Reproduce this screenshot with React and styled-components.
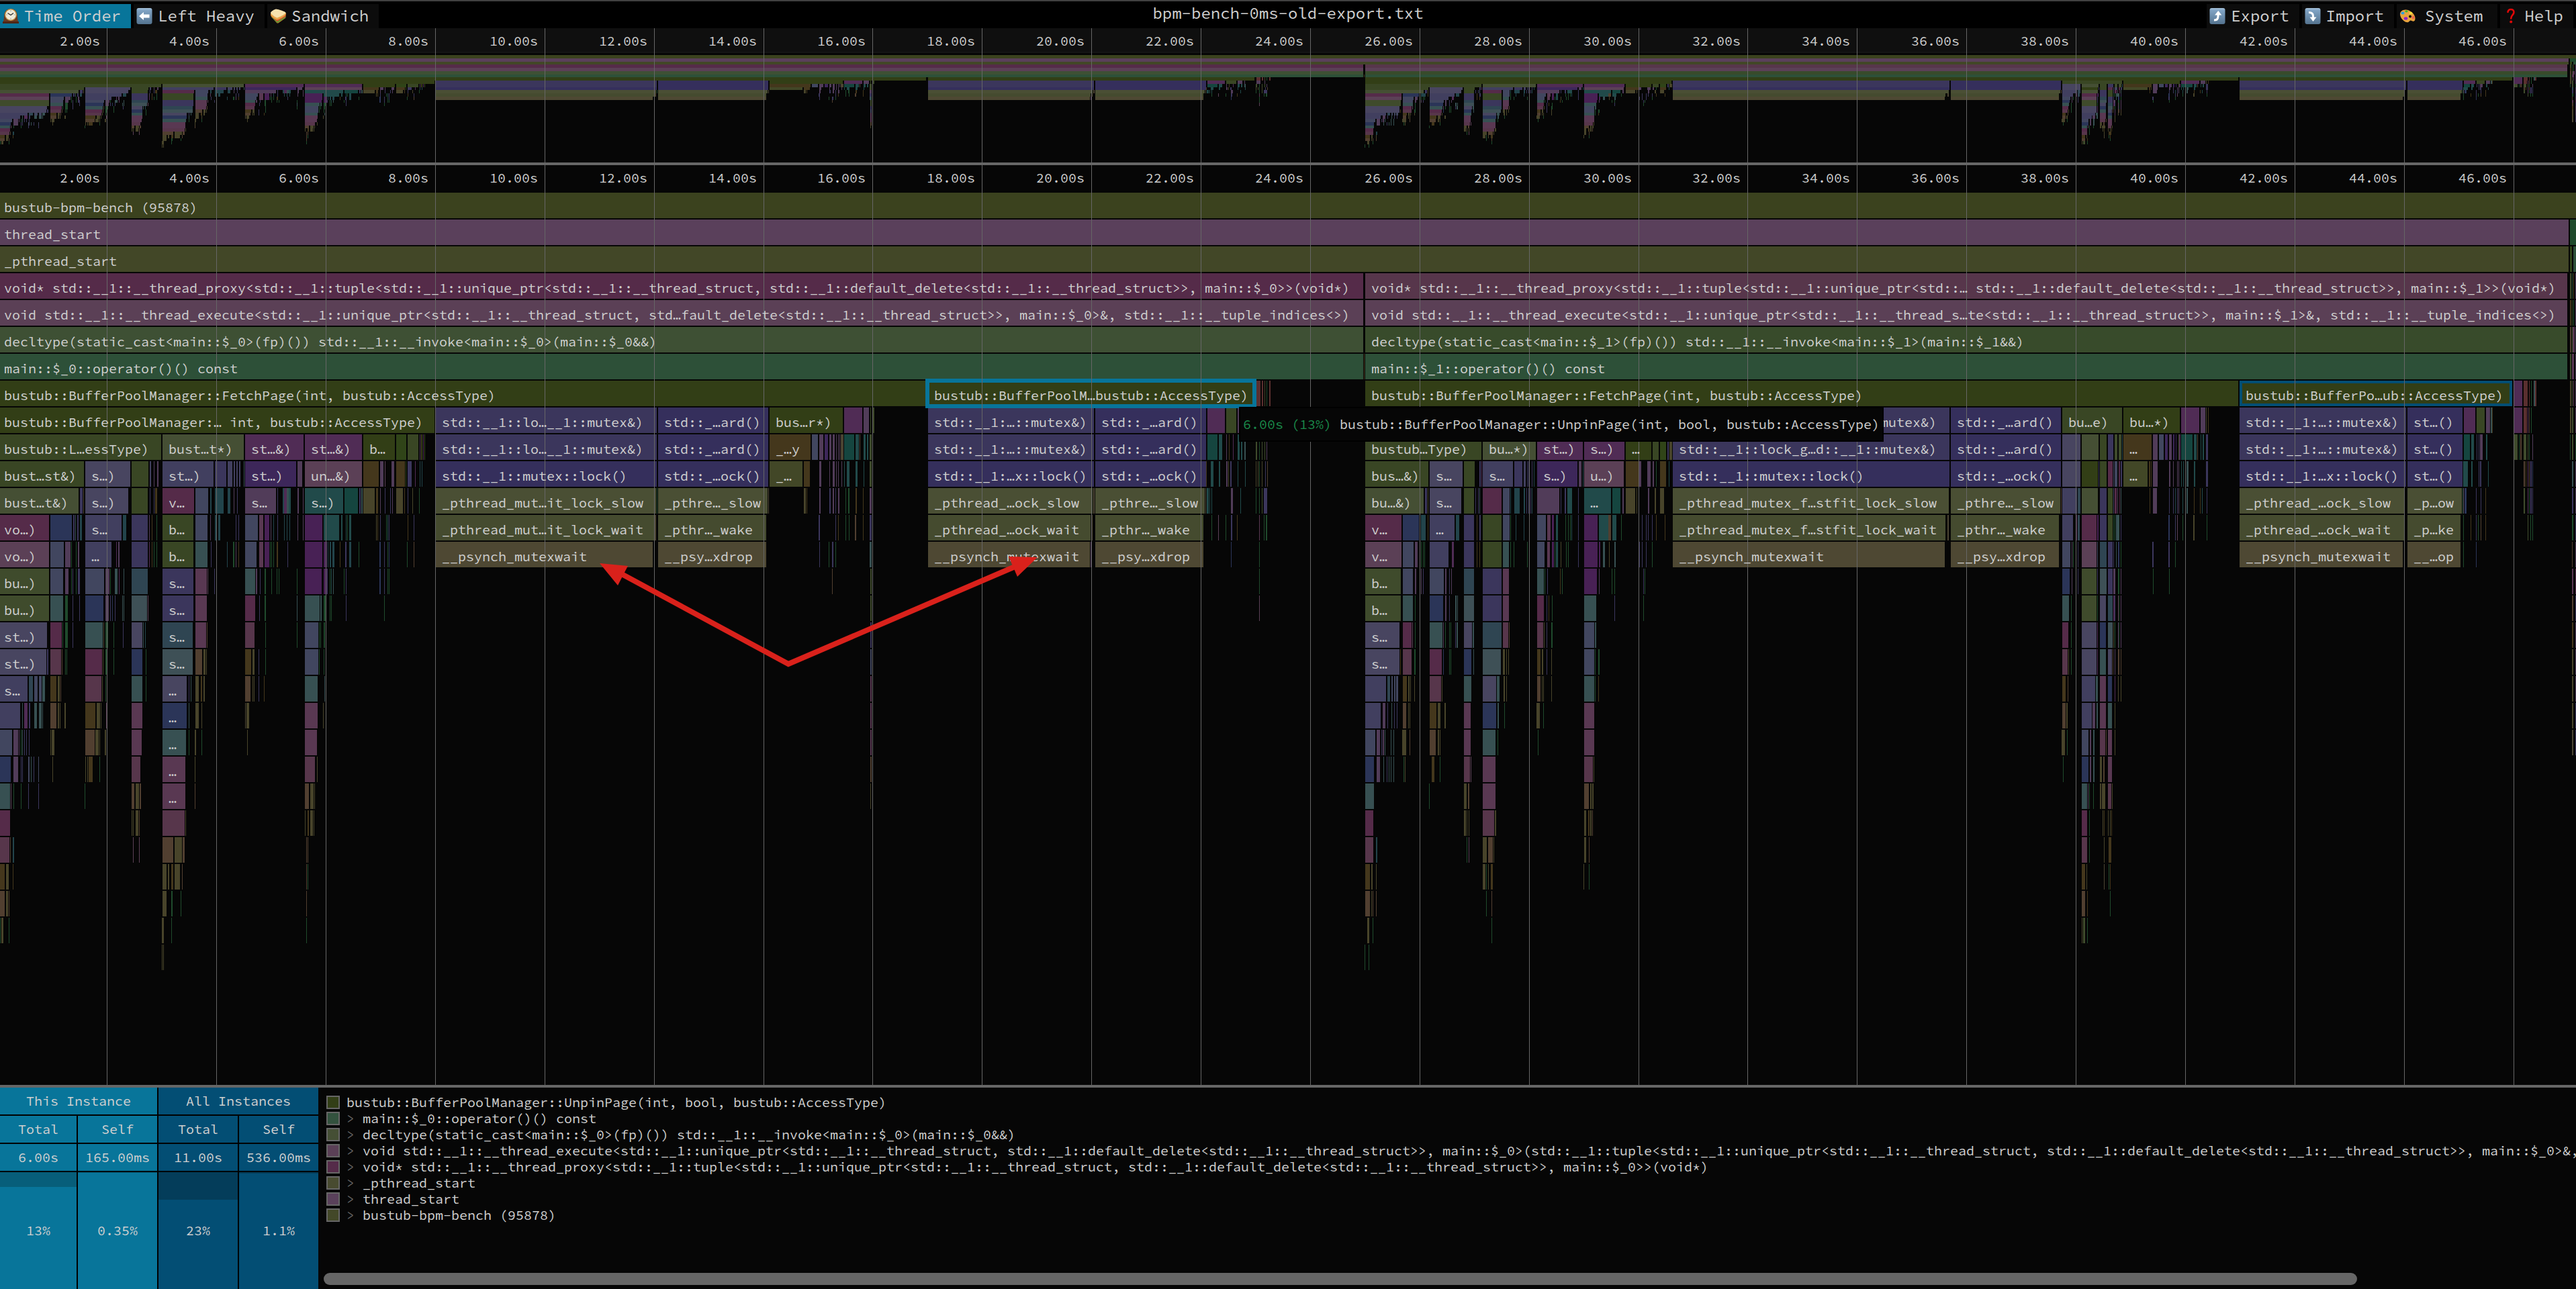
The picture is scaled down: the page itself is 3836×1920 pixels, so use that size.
import React, { useEffect, useMemo, useRef, useState } from "react";
import styled, { createGlobalStyle } from "styled-components";

const MONO = '"Source Code Pro", "Liberation Mono", monospace';

const color = {
  bg: "#060606",
  axis: "#0f0f0f",
  line: "#666666",
  text: "#d0d0d0",
  black: "#000000",
  primary: "#08759a",
  secondary: "#034e74",
};

const GlobalStyle = createGlobalStyle`
  * { box-sizing: border-box; }
  html, body, #root { height: 100%; }
  body {
    margin: 0;
    overflow: hidden;
    background: ${color.bg};
    color: ${color.text};
    font-family: ${MONO};
    font-size: 20px;
    line-height: 24px;
  }
`;

/* ---------- frame data ---------- */

const FILL = {
  O: "#323e16", G: "#394624", H: "#454f34", K: "#3f4b2c", k: "#304418",
  L: "#484560", l: "#413f5f", P: "#3b365c", D: "#352f5c", B: "#2b3558",
  S: "#41465f", T: "#375052", t: "#3e5056", u: "#2f4552", v: "#552b49",
  w: "#593852", q: "#57364b", r: "#5b4056", m: "#502c55", n: "#513c59",
  y: "#3d275a", z: "#482155", x: "#15453f", X: "#214a4a", i: "#22444b",
  e: "#44371c", f: "#513f30", h: "#48442a", j: "#4c4533", F: "#1f4a2c",
  R: "#5a2f2f", W: "#4a4f34", A: "#454b2f", V: "#4e4833", a: "#3b421e",
  b: "#5a405b", c: "#424727", d: "#3e5034", g: "#2d5038", E: "#384b2b",
};

/*
  Each block lists its rows from a starting depth. A frame is
  "start[-end]<fill>[ label]" in block ticks; a frame without an end is a
  single sample wide. `scale` is ticks per chart unit.
*/
const BLOCKS = [
  {
    origin: 0, scale: 1, depth: 0, rows: [
      "0-3836a bustub-bpm-bench (95878)",
      "0-3825b thread_start",
      "0-3825c _pthread_start",
      "0-2030v void* std::__1::__thread_proxy<std::__1::tuple<std::__1::unique_ptr<std::__1::__thread_struct, std::__1::default_delete<std::__1::__thread_struct>>, main::$_0>>(void*)/2033-3823q void* std::__1::__thread_proxy<std::__1::tuple<std::__1::unique_ptr<std::… std::__1::default_delete<std::__1::__thread_struct>>, main::$_1>>(void*)",
      "0-2030r void std::__1::__thread_execute<std::__1::unique_ptr<std::__1::__thread_struct, std…fault_delete<std::__1::__thread_struct>>, main::$_0>&, std::__1::__tuple_indices<>)/2033-3823r void std::__1::__thread_execute<std::__1::unique_ptr<std::__1::__thread_s…te<std::__1::__thread_struct>>, main::$_1>&, std::__1::__tuple_indices<>)",
      "0-2030d decltype(static_cast<main::$_0>(fp)()) std::__1::__invoke<main::$_0>(main::$_0&&)/2033-3823E decltype(static_cast<main::$_1>(fp)()) std::__1::__invoke<main::$_1>(main::$_1&&)",
      "0-2030g main::$_0::operator()() const/2031e/2033-3823g main::$_1::operator()() const",
      "0-1379O bustub::BufferPoolManager::FetchPage(int, bustub::AccessType)/2033-3333O bustub::BufferPoolManager::FetchPage(int, bustub::AccessType)/3335-3741O bustub::BufferPo…ub::AccessType)",
      "0-647O bustub::BufferPoolManager:… int, bustub::AccessType)/2033-2489O/2491-2903P std::__1::lock_g…d::__1::mutex&)/2905-3069D std::_…ard()/3335-3583P std::__1:…::mutex&)/3585-3667D st…()",
      "2491-2903P std::__1::lock_g…d::__1::mutex&)/2905-3069D std::_…ard()/3335-3583P std::__1:…::mutex&)/3585-3667D st…()",
      "2491-2903D std::__1::mutex::lock()/2905-3069D std::_…ock()/3335-3583D std::__1:…x::lock()/3585-3667D st…()",
      "2491-2902W _pthread_mutex_f…stfit_lock_slow/2905-3068W _pthre…_slow/3335-3581W _pthread_…ock_slow/3585-3666W _p…ow",
      "2491-2897A _pthread_mutex_f…stfit_lock_wait/2900-2902j/2905-3066A _pthr…_wake/3335-3580A _pthread_…ock_wait/3585-3664A _p…ke",
      "2491-2896V __psynch_mutexwait/2905-3066V __psy…xdrop/3335-3578V __psynch_mutexwait/3585-3664V __…op",
    ],
  },
  {
    origin: 0, scale: 2.3758, depth: 9, rows: [
      "0-570G bustub::L…essType)/575-862H bust…t*)/867-1074m st…&)/1079-1281m st…&)/1285-1397O b…/1402-1437k/1442-1480G/1485n/1490e/1493k/1497m/1502k",
      "0-297G bust…st&)/302-461L s…)/466-525G/530-535l/544n/555-561n/575-755l st…)/760-801P/805-822l/827-832l/836-841l/846-851l/862T/867-1048y st…)/1052-1069n/1079-1281r un…&)/1285-1340e/1345-1357n/1361r/1385-1394n/1402-1433e/1435k/1442-1456P/1468m/1485i/1492i",
      "0-278H bust…t&)/283-292P/295j/302-454L s…)/466-523G/530P/544P/549-556e/575-687v v…/691-736S/744-748i/760-791i/805-815i/827n/839P/867-976n s…/981P/1000-1005i/1005-1014m/1014-1022T/1022-1028X/1052-1057n/1071n/1079-1214X s…)/1218-1266x/1271-1276P/1278-1282T/1285-1326h/1330-1337e/1345n/1361P/1380P/1387n/1402-1425h/1430e/1442P/1459h/1482F",
      "0-173v vo…)/178-254B/259-264P/266T/274-279P/283-290i/302-430l s…/435-447i/466-523P/528n/537e/554F/575-684G b…/691-734S/744n/760-765i/772-779i/835P/843P/867-912S/917-931w/936-953z/958n/967i/981P/1004i/1014i/1023i/1052n/1071n/1079-1140z/1145-1200X/1207-1211X/1223X/1228F/1235-1243X/1330h/1335e/1345P/1366F/1371X/1376P/1441e/1463P",
      "0-173r vo…)/178-226S/230-249n/252F/268F/276-280n/302-394l …/411m/418-423n/466-523P/527m/537e/543F/554F/575-684G b…/691-734T/746P/764P/803i/824-829F/834n/843e/867-908S/917-931w/936-953z/955F/960F/966F/979-984e/1017P/1079-1140z/1145-1156z/1160i/1167-1171i/1177-1183i/1202e/1221-1226P/1235-1243i/1269F/1342-1347B/1359P/1371F/1376B/1440F/1463f",
      "0-173K bu…)/178-223S/230-242n/252F/257P/268F/276-283P/302-368S/373-387n/390F/406-416T/421m/437T/466-523u/575-684P s…/691-732w/734r/758P/867-903T/905-909n/919P/936-941F/960F/979F/986F/1050F/1079-1138z/1145-1156z/1158P/1167F/1171X/1178T/1216F/1223P/1342-1347B/1359P/1371F/1376F",
      "0-173K bu…)/178-223T/230-240F/257P/280P/302-366B/373-385n/390P/397B/406P/432T/437T/466-520t/523r/575-684P s…/691-732w/867-903v/917P/936-941F/1050T/1079-1131T/1133-1138T/1145-1153F/1166F/1171F/1224P/1359F",
      "0-166L st…)/178-219v/221F/230-240F/257P/302-363T/366j/373-382F/402F/435P/466-504L/507T/514i/575-682u s…/691-729w/732f/867-900q/938F/1050F/1079-1126S/1128F/1134F/1145-1151F",
      "0-164L st…)/166-170P/178-216q/219f/230F/235F/302-361v/364h/373-378F/402F/466-504B/516F/575-682t s…/691-715f/720-727h/730h/867-889e/893-900h/915P/938F/1079-1126S/1128F/1145F",
      "0-97l s…/102-116u/121-133S/138-147S/150-159T/178-200e/204-211h/214f/302-359q/362h/374F/466-504T/516F/575-660L …/668P/675T/691-703h/710-715e/720-725h/867-886f/893h/898h/915P/934e/1079-1124T/1147T",
      "0-71l/78T/85-97m/102-107P/121-131T/138-147T/150T/178-200f/204-209h/212h/228-232h/302-337e/342-354h/357h/375r/466-504w/575-660B …/668T/691-703h/713h/867j/871-881h/1079-1124w/1143h",
      "0-43S/48-64n/67n/74F/78T/86P/93P/102P/178h/183-192h/302-335f/337-341h/343-349h/352h/371-375h/466-501w/575-658T …/668F/689-693h/713F/874h/1079-1121w",
      "0-38B/48-64n/74P/79P/100-105S/109T/119P/135S/185h/302h/309h/314-328e/352F/466-497q/575-656w …/689h/1079-1114q/1121h",
      "0-36T/38r/48F/74F/100P/135P/299F/466-475f/480-492h/494-499f/575-656w …/689f/1079-1093f/1098-1109h/1112h",
      "0-36v/466h/471h/480-490h/492f/575-653q/656h/1079h/1088-1093e/1098-1107h/1110h",
      "0-33q/36f/45-49i/470r/492r/575-613f/618-644h/646-653f/1083f/1088f",
      "0-17e/21-31h/45e/575-589h/594-599h/606-613e/618-637h/644f/1083f/1088F",
      "0-17f/21-29h/31f/575-589h/606-611F/639F/1083f",
      "0F/4-12h/31F/573-580h/606F/1083F",
      "573h/578h",
    ],
  },
  {
    origin: 640, scale: 2.24, depth: 8, rows: [
      "20-757P std::__1::lo…__1::mutex&)/762-1129D std::_…ard()/1133-1378O bus…r*)/1382-1443m/1447-1465n/1469G/1476-1483G",
      "20-757P std::__1::lo…__1::mutex&)/762-1129D std::_…ard()/1133-1270e _…y/1275-1295S/1299-1313n/1317-1328y/1333-1340n/1344-1351n/1355n/1361n/1366n/1371-1379j/1382-1416x/1420-1431X/1434f/1447-1454X/1458-1463X/1467-1474K",
      "20-757D std::__1::mutex::lock()/762-1129D std::_…ock()/1133-1243c _…/1248-1268e/1299-1306n/1333n/1344-1351n/1355n/1361n/1373n/1382X/1391-1400X/1420-1427X/1447X/1467-1474K",
      "20-755W _pthread_mut…it_lock_slow/757F/762-1127W _pthre…_slow/1129j/1248-1254h/1257e/1299-1304n/1333-1337P/1344-1348n/1353P/1362-1366n/1387F/1396-1400F/1420-1425e/1445e/1467-1474n",
      "20-748A _pthread_mut…it_lock_wait/750-755j/762-1122A _pthr…_wake/1297-1301P/1353P/1362e/1387F/1398F/1418-1422f/1445e/1467-1474P",
      "20-744V __psynch_mutexwait/762-1122V __psy…xdrop/1299P/1331F/1342-1346P/1353F/1467-1474T",
      "1342f/1469-1474K",
      "1469-1474K",
      "1469-1474P",
      "1469-1474S",
      "1469-1474w",
      "1469-1474w",
      "1469-1474w",
      "1469-1474f",
      "1469h",
    ],
  },
  {
    origin: 1340, scale: 2.24, depth: 7, rows: [
      "94-1182O bustub::BufferPoolM…bustub::AccessType)/1189-1203R/1207-1212R/1217h/1223F/1232-1236R",
      "94-647P std::__1:…::mutex&)/652-1021D std::_…ard()/1026-1084m/1089-1122G/1127-1142n/1149n/1189-1203n/1216n",
      "94-647P std::__1:…::mutex&)/652-1021D std::_…ard()/1026-1060x/1064-1075X/1089n/1098e/1112m/1127-1133X/1138-1142X/1149-1154T/1187-1192K/1198F/1207K/1216K/1223n",
      "94-647D std::__1:…x::lock()/652-1021D std::_…ock()/1021e/1037-1046X/1064-1068X/1089-1093n/1096h/1102-1107P/1127X/1151X/1187h/1193h/1198F/1207h/1219P/1225f",
      "94-642W _pthread_…ock_slow/645-650j/652-1017W _pthre…_slow/1019j/1024-1030X/1033X/1039X/1104-1110n/1136X/1187F/1198F/1207K/1214-1225P",
      "94-636A _pthread_…ock_wait/640j/652-1012A _pthr…_wake/1039F/1062r/1087F/1104-1108P/1124e/1198w/1214F/1221-1225F",
      "94-634V __psynch_mutexwait/637n/652-1012V __psy…xdrop/1104B/1198F",
      "1198F",
      "1198r",
    ],
  },
  {
    origin: 2020, scale: 2.24, depth: 9, rows: [
      "29-417G bustub…Type)/421-598H bu…*)/603-755m st…)/759-894m s…)/898-983O …/988-1008G/1012-1033k/1037-1042P/1044-1053h",
      "29-240G bus…&)/244-354L s…/358-394G/410-415P/416m/421-522l s…/526-553P/558-564l/568P/574P/585P/592i/603-737y s…)/741-751n/754i/759-892r u…)/898-940e/943-950n/970-981n/988-992n/999F/1012-1033e/1042X",
      "29-224H bu…&)/228-235P/237h/244-349L s…/358-392G/396P/405P/411T/421-484v/488-511S/513i/526-544i/558-562i/567P/574P/580P/585i/603-676n/681P/694-698P/703-719X/740P/759-849X …/853-880x/887-892n/898-930h/934h/972-977n/995-1000h/1012-1026h",
      "29-150v v…/155-208B/215-230i/237e/244-327l …/332-343i/358-392P/401e/410-414P/421-484G/488-511S/513F/531i/557i/603-632S/636-647w/652-659z/665-673X/697F/705F/712F/717X/740P/759-804z/809-840X/841-849f/853-867X/883F/952P/965P/972P/986P/999e/1028e",
      "29-150r v…/155-190S/195-204n/210P/215F/221F/226F/244-307l/318-325m/358-392P/401e/410e/421-484G/488-508T/513F/524F/568F/603-627S/636-645w/652-659z/661F/666-672X/680-684h/699F/706F/740P/759-804z/809-813z/821-829T/842h/860-865T/942P/952P/965P/986F",
      "29-148K b…/155-188S/195-199n/215n/222P/244-291S/296-301n/309P/316n/358-392u/421-484P/488-508w/603-625T/628F/636P/679e/685F/759-802z/809n/851F/860F/941F/956P/961F",
      "29-148K b…/155-188T/195F/244-289B/296-301n/309P/329-333T/335T/358-392t/421-484P/488-508w/603-625v/634P/641e/652F/759-800T/860P/956F",
      "29-143L s…/155-184v/186r/195F/244-287T/289n/296F/309F/314F/329P/334-338T/358-385L/388-392T/421-484u/488-506q/508f/603-623q/625h/634P/650-654F/759-793S/795-800T",
      "29-143L s…/146e/155-184q/193-197F/244-284v/289B/309F/314F/358-383B/390T/421-482t/488-495h/500h/506h/603-614e/618-623h/634P/650h/759-793S/795F/806-811F",
      "29-99l/103-112u/116-121S/125-130S/133-139S/155-168e/172-177h/179h/193h/244-282q/284h/358-383T/421-466L/468-477T/491-495h/500h/603-614f/618h/623h/650h/759-793T/795F/806e",
      "29-81l/87-96n/103P/116T/125P/134P/155-166f/172h/177h/244-267e/271-280h/293-298h/358-381w/421-466B/470-475T/493F/600-612h/623F/759-793w",
      "29-63S/67-78n/83P/87-91n/94T/114T/123T/152-166h/177f/244-264f/271-276h/278h/358-381w/421-464T/470F/605F/759-793w",
      "29-58B/67-78n/90T/101P/107T/114T/123T/157F/161h/251-260e/278F/358-379q/381r/421-464w/759-788q/791h",
      "29-58T/242F/358-367h/372-376f/421-464w/759-775f/780-784h/786-791h",
      "29-56v/358-365h/367h/373h/421-459q/461-466h/759-766h/773-777e/780-784h/786f",
      "29-56q/65-69i/367F/373r/421-435h/439-455f/457h/759-766h/775f",
      "29-45e/49-54h/65h/421-430h/432F/439h/448-455e/757h/775F",
      "29-45f/49-52h/54f/65f/432F/450f",
      "36-43h/54F/450F",
      "27F/40F",
    ],
  },
  {
    origin: 3060, scale: 3, depth: 8, rows: [
      "33-300G bu…e)/306-558O bu…*)/564-645m/651-672n/675h/684e",
      "33-114L/120-195H/201-231G/237-261P/267-279K/285-297K/300i/306-432e …/438-459n/465-486S/492-504y/510-522n/528-534y/540y/552K/555-561m/564-615x/621-633X/636f/651X/660-666X/675-684P",
      "33-114L/120-192O/195P/201-231G/237-258v/261S/267-279S/285-291v/294-300P/306-414c …/420-426e/429e/438-459n/510-516n/528n/546n/552n/564X/573X/582X/588-597T/621-627X/675-684P",
      "27f/33-99l/102-114u/120-192H/201-231P/237-258G/261S/267-276v/279n/288v/294T/423e/438-456n/510P/528P/537i/546P/552n/570X/588-594T/621e/648e/657X/678P",
      "33-81l/93-99m/102-111u/120-186v/189-195z/201-231P/237-258G/261F/267F/273-288T/294P/507-513B/537P/546r/570F/618-624h/678F",
      "33-69S/75n/81F/93P/102P/120-186r/189S/201-231u/237-258P/261P/273T/282-288B/294F/435-441P/507-513P/537F",
      "33-66B/75n/93n/102P/120-186K/189P/201-231t/237-258P/261-270n/282-288F/294n/438F/510F",
      "33-63T/72F/93F/120-186K/189F/201-228L/237-258u/261-267m/267P/282v/285F/294n",
      "33-60v/72F/93F/120-186L/189m/201-228B/237-258t/261h/267F/282m/285F/294n",
      "33-57q/60h/72F/120-186L/189m/201-228T/237-255L/258f/267n/282-288f/294f",
      "33-48e/57f/120-180l/183-191T/201-228w/237-255B/267m/282h/294h",
      "33-48f/51-57h/120-165l/168-180n/186-192T/201-228w/237-255T/267h",
      "30-45h/54F/120-150S/156-162n/171-177T/201-225q/228f/237-255w/267h",
      "36F/120-150B/156-162n/171-177T/201-210h/216-222f/237-255w",
      "120-144T/147n/153F/171F/201-207h/210-225h/237-252q/255h",
      "120-144v/153F/213h/219e/237h/246h/252e",
      "120-144q/153F/219h/240-252e",
      "120-135e/141h/219j/240F/246e",
      "120-135f/144e/246F",
      "120h/126-135K/144F",
    ],
  },
  {
    origin: 3650, scale: 3, depth: 1, rows: [
      "531-558F",
      "531-540k/546-558g",
      "531-537K/540F/546e/555n",
      "531-537e/540k/546F/555n",
      "531-537f/540k/543-552w/555n",
      "531-537K/540-549w/555n",
      "278-318m/324-342R/348R/357F/369-375T/375-381R/531-537h/540K/546w/555n",
      "57-108m/114-150G/156-174n/177-183T/183e/279-318m/324-339R/342m/348f/357F/531-537h/540-546K/555n",
      "57-84x/90-102X/114P/123P/129-141n/156-162X/279-297K/303F/309-315f/324-336K/342K/348F/363n/531F/540-546K/555F",
      "54-75X/60n/90-96X/123P/129-135P/165X/279P/324-330f/333e/342m/348f/354-360P/363B/540-546T/555n",
      "51F/54n/60-69B/111P/132P/153e/324-330K/342m/348F/354-360P/363P/540-546P/555n",
      "54F/87e/111P/120F/132f/153e/342K/354F/363F/540-546F/555P",
      "54F/111B/540f/555n",
      "540-546w/555v",
      "540-546f/555P",
      "540-546e/555n",
      "540-546h/555n",
      "540-546h/555n",
      "540-546h/555P",
      "540-546j/555P",
    ],
  },
];

const parseFrames = () =>
  BLOCKS.flatMap(({ origin, scale, depth, rows }) =>
    rows.flatMap((row, i) =>
      row.split("/").map((cell) => {
        const [, from, to, fill, label] = cell.match(/^(\d+)(?:-(\d+))?(\w)(?: (.*))?$/);
        const x = Math.round(origin + from / scale);
        const end = to ? Math.round(origin + to / scale) : x + 1;
        return { x, width: Math.max(1, end - x), depth: depth + i, fill, label };
      })
    )
  );

const FRAMES = parseFrames();

const CHART_UNITS = 3836;
const ROW_PITCH = 40;
const CHART_TOP = 41;
const SELECTED_DEPTH = 7;
const GRID_START = -3.5;
const GRID_STEP = 162.87;
const GRID_SECONDS = Array.from({ length: 23 }, (_, i) => (i + 1) * 2);

const gridX = (seconds, ratio) =>
  Math.round((GRID_START + (seconds / 2) * GRID_STEP) * ratio);

const framePaths = (ratio, top, pitch, gap) => {
  const byFill = {};
  FRAMES.forEach(({ x, width, depth, fill }) => {
    const y0 = Math.round(top + depth * pitch);
    const y1 = Math.round(top + (depth + 1) * pitch) - gap;
    const x0 = Math.round(x * ratio);
    const w = Math.max(1, Math.round(width * ratio));
    byFill[fill] = `${byFill[fill] || ""}M${x0} ${y0}h${w}v${y1 - y0}h${-w}z`;
  });
  return Object.entries(byFill);
};

const useRatio = (ref) => {
  const [width, setWidth] = useState(() => window.innerWidth);
  useEffect(() => {
    const observer = new ResizeObserver(([entry]) => setWidth(entry.contentRect.width));
    observer.observe(ref.current);
    return () => observer.disconnect();
  }, [ref]);
  return width / CHART_UNITS;
};

/* ---------- layout ---------- */

const Page = styled.div`
  display: flex;
  flex-direction: column;
  height: 100vh;
  background: ${color.bg};
`;

const Toolbar = styled.header`
  display: grid;
  grid-template-columns: 1fr auto 1fr;
  flex: none;
  height: 42px;
  padding-top: 4px;
  border-top: 2px solid #404040;
  background: ${color.black};
  font-size: 24px;
  line-height: 36px;
`;

const ToolGroup = styled.nav`
  display: flex;
  gap: 4px;
  justify-content: ${(p) => (p.$end ? "flex-end" : "flex-start")};
  padding-right: ${(p) => (p.$end ? "4px" : "0")};
`;

const ToolButton = styled.button`
  display: flex;
  align-items: center;
  gap: ${(p) => (p.$roomy ? "14px" : "8px")};
  height: 36px;
  padding: 0 ${(p) => (p.$roomy ? "22px" : "15px")} 0 4px;
  border: 0;
  background: ${(p) => (p.$active ? color.primary : "#0c0c0c")};
  color: ${color.text};
  font: inherit;
  white-space: pre;
`;

const Title = styled.h1`
  margin: 0;
  font: inherit;
  line-height: 28px;
`;

const Overview = styled.section`
  flex: none;
  height: 204px;
  border-bottom: 4px solid ${color.line};
`;

const Flame = styled.main`
  position: relative;
  flex: 1;
  min-height: 0;
  overflow: hidden;
  border-bottom: 4px solid ${color.line};
`;

const Chart = styled.svg`
  display: block;
  width: 100%;
  height: 100%;
  font-family: ${MONO};
  font-size: 20px;
  fill: ${color.text};
  shape-rendering: crispEdges;
`;

const Notes = styled.svg`
  position: absolute;
  inset: 0;
  width: 100%;
  height: 100%;
  pointer-events: none;
`;

const Tooltip = styled.div`
  position: absolute;
  top: 360px;
  left: 48.1%;
  height: 52px;
  padding: 12px 4px;
  border: 2px solid ${color.black};
  background: ${color.bg};
  white-space: nowrap;
`;

const Timing = styled.span`
  color: #1a8a4a;
`;

const Details = styled.section`
  display: flex;
  flex: none;
  height: 300px;
`;

const Stats = styled.table`
  flex: none;
  width: 474px;
  height: 300px;
  table-layout: fixed;
  border-collapse: separate;
  border-spacing: 0;
  text-align: center;
`;

const StatColumn = styled.col`
  width: ${(p) => p.$width}px;
`;

const StatRow = styled.tr`
  height: ${(p) => (p.$tall ? "174px" : "42px")};
`;

const tone = (p) => (p.$all ? color.secondary : color.primary);

const StatHead = styled.th`
  padding: 0;
  border-right: ${(p) => (p.$last ? "0" : "2px")} solid ${color.black};
  border-bottom: 2px solid ${color.black};
  background: ${tone};
  font-weight: normal;
`;

const StatCell = styled.td`
  padding: 0;
  border-right: ${(p) => (p.$last ? "0" : "2px")} solid ${color.black};
  border-bottom: ${(p) => (p.$share === undefined ? "2px" : "0")} solid ${color.black};
  background: ${tone};
  ${(p) =>
    p.$share !== undefined &&
    `background: linear-gradient(${p.$all ? "#043d5a" : "#075e7a"} ${p.$share}px, ${tone(p)} ${p.$share}px);`}
`;

const Stack = styled.div`
  display: flex;
  flex: 1;
  flex-direction: column;
  justify-content: space-between;
  min-width: 0;
  padding: 10px 0 6px 12px;
  overflow: hidden;
`;

const StackList = styled.ol`
  margin: 0;
  padding: 0;
  list-style: none;
`;

const StackItem = styled.li`
  display: flex;
  align-items: center;
  height: 24px;
  white-space: pre;
`;

const Swatch = styled.span`
  flex: none;
  width: 20px;
  height: 20px;
  margin-right: 10px;
  border: 2px solid ${color.line};
  background: ${(p) => p.$fill};
`;

const Chevron = styled.span`
  color: ${color.line};
`;

const ScrollThumb = styled.div`
  width: 90.4%;
  height: 18px;
  margin-left: -4px;
  border-radius: 9px;
  background: ${color.line};
`;

const Glyph = styled.svg`
  flex: none;
  width: 24px;
  height: 24px;
`;

/* ---------- icons ---------- */

const ClockIcon = () => (
  <Glyph viewBox="0 0 24 24">
    <path d="M1 21c0-3 1-4 1-8C2 5 6 1 12 1s10 4 10 12c0 4 1 5 1 8z" fill="#6b3a22" />
    <path d="M0 20h24v3H0z" fill="#4d2717" />
    <circle cx="12" cy="10" r="9" fill="#c49a52" />
    <circle cx="12" cy="10" r="7.6" fill="#f0ead8" />
    <path d="M7.5 7.5 12 10.5l4-3" stroke="#2c2c2c" strokeWidth="1.2" fill="none" />
    <path d="M12 3.5V5M12 15v1.5M5.5 10H7M17 10h1.500" stroke="#8a8576" strokeWidth=".8" />
  </Glyph>
);

const KeycapBase = ({ children }) => (
  <Glyph viewBox="0 0 24 24">
    <defs>
      <linearGradient id="keycap" x1="0" y1="0" x2="0" y2="1">
        <stop offset="0" stopColor="#a9c4dd" />
        <stop offset=".15" stopColor="#7fa2c3" />
        <stop offset="1" stopColor="#54738f" />
      </linearGradient>
    </defs>
    <rect x=".5" y="0" width="23" height="24" rx="3" fill="url(#keycap)" />
    {children}
  </Glyph>
);

const LeftIcon = () => (
  <KeycapBase>
    <path d="M4 12l7-6v3.600h8.500v4.800H11V18z" fill="#fff" />
  </KeycapBase>
);

const ExportIcon = () => (
  <KeycapBase>
    <path d="M7 18c4.500 0 6-2 6-5.500V9.500" stroke="#fff" strokeWidth="3" fill="none" />
    <path d="M8 10.500 13.300 4l5 6.500z" fill="#fff" />
  </KeycapBase>
);

const ImportIcon = () => (
  <KeycapBase>
    <path d="M6 6.500c4.500 0 6.500 2 6.500 5.500v2" stroke="#fff" strokeWidth="3" fill="none" />
    <path d="M7.500 13.500h10l-5 6.500z" fill="#fff" />
  </KeycapBase>
);

const SandwichIcon = () => (
  <Glyph viewBox="0 0 24 24">
    <path d="M1 8l2 6 7 8c1 .8 2 .6 3 0l10-7 1-8z" fill="#c9792a" />
    <path d="M1.500 12l9 7.500 13-7v1.800l-12.500 8L2 13.500z" fill="#5c9a34" />
    <path d="M1.500 10l9 7.500 13-7v2l-12.800 7.500L1.500 12z" fill="#d9532e" />
    <path d="M1 7.500c2 2.500 8 6 9.500 6s11-4.500 13-6.500v3c-2 2.500-11 7.500-13 7.500S1 12 1 10z" fill="#e8a64a" />
    <path d="M1 7c0-1.500 6-5.500 8-5.500S23.500 5 23.500 7 12 14.500 10.500 14.500 1 9 1 7z" fill="#f7e2ae" />
  </Glyph>
);

const PaletteIcon = () => (
  <Glyph viewBox="0 0 24 24">
    <path d="M1 9c0-4 4-7 9-6.500 8 .8 14 8 13.500 13.500-.3 4-3 4.500-5 3-1.500-1.200-3-.5-4 1-1.500 2-5 1.500-8-1C3 16 1 12.500 1 9z" fill="#e8a33d" />
    <circle cx="16" cy="12.500" r="2" fill="#0a0a0a" />
    <ellipse cx="5" cy="7.500" rx="2.600" ry="1.900" fill="#2b9fe0" />
    <ellipse cx="10.500" cy="4.800" rx="2.200" ry="1.600" fill="#3fb52e" />
    <ellipse cx="17" cy="7.500" rx="2.300" ry="1.700" fill="#f2e13a" />
    <ellipse cx="20.500" cy="14" rx="1.800" ry="2.300" fill="#ef5f4e" />
    <ellipse cx="9.500" cy="15.500" rx="2.800" ry="2.200" fill="#9124c4" />
  </Glyph>
);

const HelpIcon = () => (
  <Glyph viewBox="0 0 24 24">
    <path d="M7.500 6c.5-3 2.300-4 4.500-4 2.800 0 4.500 1.800 4.500 4.300 0 3.700-4.300 4-4.300 9.200" stroke="#e00808" strokeWidth="2.600" fill="none" strokeLinecap="round" />
    <circle cx="12.200" cy="20.500" r="2" fill="#e00808" />
  </Glyph>
);

/* ---------- charts ---------- */

const Grid = ({ ratio }) => (
  <g>
    {GRID_SECONDS.map((s) => (
      <rect key={s} x={gridX(s, ratio)} y="0" width="1" height="100%" fill={color.line} />
    ))}
    {GRID_SECONDS.map((s) => (
      <text key={s} x={gridX(s, ratio) - 10} y="26" textAnchor="end">
        {s.toFixed(2)}s
      </text>
    ))}
  </g>
);

const FrameLayer = ({ paths }) =>
  paths.map(([fill, d]) => <path key={fill} d={d} fill={FILL[fill]} />);

const OverviewChart = () => {
  const ref = useRef(null);
  const ratio = useRatio(ref);
  const paths = useMemo(() => framePaths(ratio, 40, 4.75, 0), [ratio]);
  return (
    <Overview ref={ref} aria-label="Overview">
      <Chart>
        <rect width="100%" height="35" fill={color.axis} />
        <rect y="35" width="100%" height="2" fill="#151515" />
        <FrameLayer paths={paths} />
        <Grid ratio={ratio} />
      </Chart>
    </Overview>
  );
};

const FlameChart = () => {
  const ref = useRef(null);
  const ratio = useRatio(ref);
  const paths = useMemo(() => framePaths(ratio, CHART_TOP, ROW_PITCH, 2), [ratio]);
  const px = (v) => Math.round(v * ratio);
  const selectedTop = CHART_TOP + SELECTED_DEPTH * ROW_PITCH;
  return (
    <Flame ref={ref}>
      <Chart>
        <FrameLayer paths={paths} />
        <rect x={px(1381)} y={selectedTop} width={px(487)} height="38" fill="none" stroke={color.primary} strokeWidth="6" />
        <rect x={px(3337)} y={selectedTop + 2} width={px(402)} height="34" fill="none" stroke={color.secondary} strokeWidth="4" />
        <Grid ratio={ratio} />
        {FRAMES.filter((f) => f.label).map((f) => (
          <text key={`${f.depth}:${f.x}`} x={f.x === 0 ? 6 : px(f.x) + 9} y={CHART_TOP + f.depth * ROW_PITCH + 29}>
            {f.label}
          </text>
        ))}
      </Chart>
      <Notes>
        <g transform={`scale(${ratio} 1)`} fill="#d9211b">
          <path d="M922 607 1174 743 1516 596" fill="none" stroke="#d9211b" strokeWidth="8" />
          <path d="M893 593l42 4-15 29z" />
          <path d="M1545 584l-43-1 13 30z" />
        </g>
      </Notes>
      <Tooltip role="tooltip">
        <Timing>6.00s (13%)</Timing> bustub::BufferPoolManager::UnpinPage(int, bool, bustub::AccessType)
      </Tooltip>
    </Flame>
  );
};

/* ---------- details ---------- */

const STACK = [
  ["#323e16", "bustub::BufferPoolManager::UnpinPage(int, bool, bustub::AccessType)"],
  ["#33523e", "main::$_0::operator()() const"],
  ["#454f35", "decltype(static_cast<main::$_0>(fp)()) std::__1::__invoke<main::$_0>(main::$_0&&)"],
  ["#5b4057", "void std::__1::__thread_execute<std::__1::unique_ptr<std::__1::__thread_struct, std::__1::default_delete<std::__1::__thread_struct>>, main::$_0>(std::__1::tuple<std::__1::unique_ptr<std::__1::__thread_struct, std::__1::default_delete<std::__1::__thread_struct>>, main::$_0>&, std::__1::__tuple_indices<>)"],
  ["#552b49", "void* std::__1::__thread_proxy<std::__1::tuple<std::__1::unique_ptr<std::__1::__thread_struct, std::__1::default_delete<std::__1::__thread_struct>>, main::$_0>>(void*)"],
  ["#484b30", "_pthread_start"],
  ["#5a415b", "thread_start"],
  ["#434828", "bustub-bpm-bench (95878)"],
];

const App = () => (
  <Page>
    <GlobalStyle />
    <Toolbar>
      <ToolGroup aria-label="View">
        <ToolButton $active><ClockIcon />Time Order</ToolButton>
        <ToolButton><LeftIcon />Left Heavy</ToolButton>
        <ToolButton><SandwichIcon />Sandwich</ToolButton>
      </ToolGroup>
      <Title>bpm-bench-0ms-old-export.txt</Title>
      <ToolGroup $end aria-label="Actions">
        <ToolButton><ExportIcon />Export</ToolButton>
        <ToolButton><ImportIcon />Import</ToolButton>
        <ToolButton $roomy><PaletteIcon />System</ToolButton>
        <ToolButton><HelpIcon />Help</ToolButton>
      </ToolGroup>
    </Toolbar>
    <OverviewChart />
    <FlameChart />
    <Details>
      <Stats>
        <colgroup>
          <StatColumn $width={116} />
          <StatColumn $width={120} />
          <StatColumn $width={120} />
          <StatColumn $width={118} />
        </colgroup>
        <thead>
          <StatRow>
            <StatHead colSpan={2}>This Instance</StatHead>
            <StatHead colSpan={2} $all $last>All Instances</StatHead>
          </StatRow>
          <StatRow>
            <StatHead>Total</StatHead>
            <StatHead>Self</StatHead>
            <StatHead $all>Total</StatHead>
            <StatHead $all $last>Self</StatHead>
          </StatRow>
        </thead>
        <tbody>
          <StatRow>
            <StatCell>6.00s</StatCell>
            <StatCell>165.00ms</StatCell>
            <StatCell $all>11.00s</StatCell>
            <StatCell $all $last>536.00ms</StatCell>
          </StatRow>
          <StatRow $tall>
            <StatCell $share={22}>13%</StatCell>
            <StatCell $share={1}>0.35%</StatCell>
            <StatCell $all $share={41}>23%</StatCell>
            <StatCell $all $last $share={2}>1.1%</StatCell>
          </StatRow>
        </tbody>
      </Stats>
      <Stack>
        <StackList>
          {STACK.map(([fill, name], i) => (
            <StackItem key={name}>
              <Swatch $fill={fill} />
              {i > 0 && <Chevron>{"> "}</Chevron>}
              <span>{name}</span>
            </StackItem>
          ))}
        </StackList>
        <ScrollThumb />
      </Stack>
    </Details>
  </Page>
);

export default App;
